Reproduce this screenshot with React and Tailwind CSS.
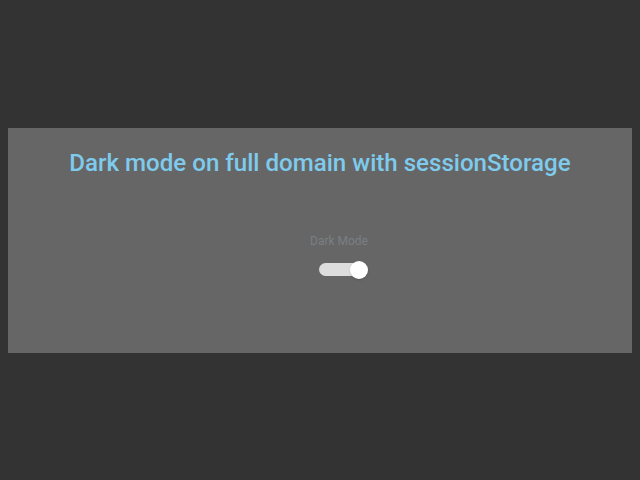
import React, { useState } from 'react';

const App = () => {
  const [dark, setDark] = useState(true);

  return (
    <div className="w-[640px] h-[480px] bg-[#333333] flex items-center px-2 font-['Roboto',sans-serif]">
      <div className="w-full h-[225px] bg-[#666666] flex flex-col items-center">
        <h1 className="mt-[19px] text-[24.1px] leading-[32px] text-[#7ecbed] font-medium">
          Dark mode on full domain with sessionStorage
        </h1>
        <div className="ml-[38px] mt-[54px] text-[12px] leading-[16px] text-[#7a7f83]">Dark Mode</div>
        <button
          onClick={() => setDark(!dark)}
          className="ml-[47px] mt-[11px] relative w-[49px] h-[20px] flex items-center"
        >
          <span className="block w-[43px] h-[13px] rounded-full bg-[#dddddd]" />
          <span className="absolute right-[0px] top-[1px] w-[18px] h-[18px] rounded-full bg-white shadow" />
        </button>
      </div>
    </div>
  );
};

export default App;
